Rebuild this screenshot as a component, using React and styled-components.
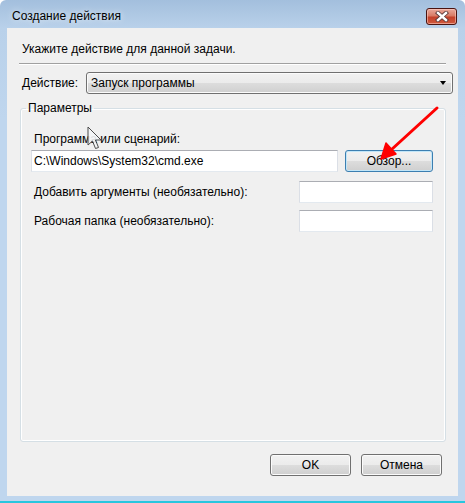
import React from 'react'
import styled, { createGlobalStyle } from 'styled-components'

const Global = createGlobalStyle`
  html, body {
    margin: 0;
    padding: 0;
  }
  body {
    width: 465px;
    height: 503px;
    overflow: hidden;
    font-family: "Liberation Sans", Arial, sans-serif;
    font-size: 12px;
    color: #000;
  }
`

const Window = styled.div`
  position: relative;
  width: 465px;
  height: 503px;
  box-sizing: border-box;
  display: flex;
  flex-direction: column;
  background: linear-gradient(to bottom, #a3bfdd 0px, #b9d1ea 28px, #bfd6ee 120px, #bfd6ee 100%);
  border-bottom: 2px solid #27c6de;
  border-radius: 6px 6px 0 0;
`

const TitleBar = styled.div`
  height: 28px;
  flex: none;
  display: flex;
  align-items: center;
  justify-content: space-between;
  padding: 4px 8px 0 12px;
  box-sizing: border-box;

  span {
    font-size: 12px;
    color: #000;
    text-shadow: 0 0 6px rgba(255, 255, 255, 0.9);
  }
`

const CloseButton = styled.div`
  width: 31px;
  height: 17px;
  box-sizing: border-box;
  border: 1px solid #4a1410;
  border-radius: 3px;
  background: linear-gradient(to bottom, #e9a99b 0%, #d87b65 45%, #c4412a 55%, #cf5a3e 100%);
  box-shadow: inset 0 0 0 1px rgba(255, 210, 200, 0.55);
  display: flex;
  align-items: center;
  justify-content: center;
`

const Client = styled.div`
  flex: 1;
  margin: 0 7px 5px 7px;
  background: #f0f0f0;
  display: flex;
  flex-direction: column;
  padding: 0 5px 20px 12px;
  box-sizing: border-box;
`

const Instruction = styled.div`
  margin: 13px 0 0 3px;
  line-height: 16px;
`

const Separator = styled.div`
  margin: 6px 7px 0 0;
  border-top: 1px solid #a0a0a0;
  border-bottom: 1px solid #ffffff;
`

const ActionRow = styled.div`
  margin-top: 7px;
  display: flex;
  align-items: center;
`

const ActionLabel = styled.span`
  width: 64px;
  flex: none;
  padding-left: 3px;
`

const Select = styled.div`
  flex: 1;
  height: 22px;
  box-sizing: border-box;
  border: 1px solid #707070;
  border-radius: 3px;
  background: linear-gradient(to bottom, #f2f2f2 0%, #ebebeb 50%, #dddddd 50%, #cfcfcf 100%);
  box-shadow: inset 0 0 0 1px #fbfbfb;
  display: flex;
  align-items: center;
  justify-content: space-between;
  padding: 0 6px 0 4px;

  &::after {
    content: '';
    border-left: 3.5px solid transparent;
    border-right: 3.5px solid transparent;
    border-top: 4px solid #000;
  }
`

const Group = styled.fieldset`
  flex: 1;
  margin: 6px 7px 0 1px;
  padding: 0 12px 0 10px;
  border: 1px solid #d5dfe5;
  border-radius: 3px;
  box-shadow: inset 0 0 0 1px #ffffff;
  min-width: 0;
`

const Legend = styled.legend`
  padding: 0 2px;
  margin-left: -5px;
  line-height: 16px;
`

const FieldLabel = styled.div`
  margin: 15px 0 0 3px;
  line-height: 16px;
`

const Row = styled.div`
  display: flex;
  align-items: center;
  gap: 7px;
  margin-top: ${p => p.$top}px;
`

const RowLabel = styled.span`
  flex: 1;
  padding-left: 3px;
`

const Input = styled.div`
  height: 22px;
  box-sizing: border-box;
  background: #fff;
  border: 1px solid #dbdfe6;
  border-top-color: #abadb3;
  border-bottom-color: #e3e9ef;
  display: flex;
  align-items: center;
  padding-left: 2px;
  white-space: nowrap;
  ${p => (p.$width ? `width: ${p.$width}px; flex: none;` : 'flex: 1;')}
`

const Button = styled.div`
  width: ${p => p.$width}px;
  height: 22px;
  flex: none;
  box-sizing: border-box;
  border: 1px solid ${p => (p.$focus ? '#3c7fb1' : '#707070')};
  border-radius: 3px;
  background: linear-gradient(to bottom, #f2f2f2 0%, #ebebeb 50%, #dddddd 50%, #cfcfcf 100%);
  box-shadow: inset 0 0 0 1px ${p => (p.$focus ? '#c2e6f8' : '#fbfbfb')};
  display: flex;
  align-items: center;
  justify-content: center;
`

const Footer = styled.div`
  margin: 12px 11px 0 0;
  display: flex;
  justify-content: flex-end;
  gap: 10px;
`

const Overlay = styled.svg`
  position: absolute;
  left: 0;
  top: 0;
  pointer-events: none;
`

const App = () => {
  return (
    <Window>
      <Global />
      <TitleBar>
        <span>Создание действия</span>
        <CloseButton>
          <svg width="14" height="11" viewBox="0 0 14 11">
            <path d="M3 2 L11 9 M11 2 L3 9" stroke="#5a3a3a" strokeWidth="4.2" strokeLinecap="square" />
            <path d="M3 2 L11 9 M11 2 L3 9" stroke="#ffffff" strokeWidth="2.4" strokeLinecap="square" />
          </svg>
        </CloseButton>
      </TitleBar>

      <Client>
        <Instruction>Укажите действие для данной задачи.</Instruction>
        <Separator />

        <ActionRow>
          <ActionLabel>Действие:</ActionLabel>
          <Select>Запуск программы</Select>
        </ActionRow>

        <Group>
          <Legend>Параметры</Legend>
          <FieldLabel>Программа или сценарий:</FieldLabel>
          <Row $top={3}>
            <Input>C:\Windows\System32\cmd.exe</Input>
            <Button $width={88} $focus>Обзор...</Button>
          </Row>
          <Row $top={9}>
            <RowLabel>Добавить аргументы (необязательно):</RowLabel>
            <Input $width={134} />
          </Row>
          <Row $top={7}>
            <RowLabel>Рабочая папка (необязательно):</RowLabel>
            <Input $width={134} />
          </Row>
        </Group>

        <Footer>
          <Button $width={81}>OK</Button>
          <Button $width={81}>Отмена</Button>
        </Footer>
      </Client>

      <Overlay width="465" height="503" viewBox="0 0 465 503">
        {/* red arrow */}
        <path d="M437 108 L391 150" stroke="#f00" strokeWidth="3" strokeLinecap="round" />
        <path d="M381 159 L386 143 L396 154 Z" fill="#f00" stroke="#f00" strokeWidth="1.5" strokeLinejoin="round" />
        {/* mouse cursor */}
        <path
          d="M88 127 L88 145 L92.5 141 L95.5 148.5 L98.5 147.5 L95.5 140 L101 140 Z"
          fill="#f4f6f8"
          stroke="#3a3a3a"
          strokeWidth="1"
          strokeLinejoin="round"
          opacity="0.9"
        />
      </Overlay>
    </Window>
  )
}

export default App
